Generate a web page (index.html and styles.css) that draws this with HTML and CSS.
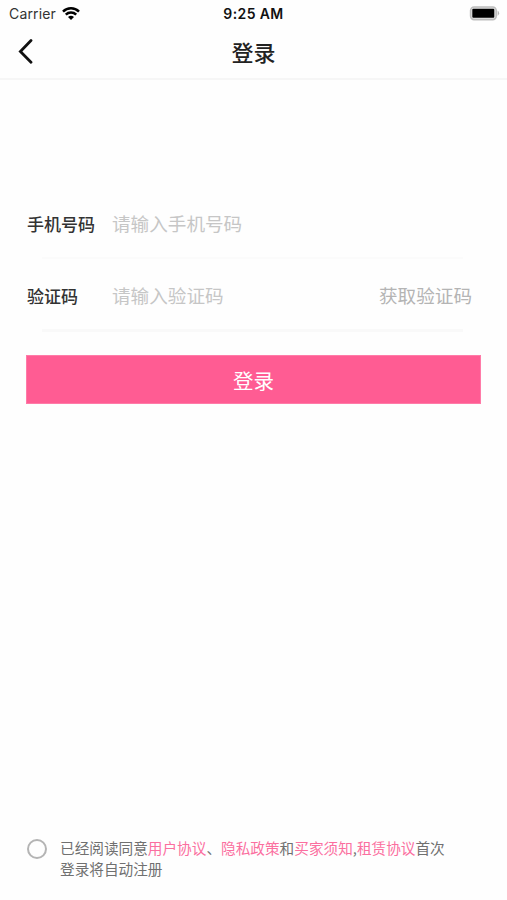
FILE: index.html
```html
<!DOCTYPE html>
<html lang="zh-CN">
<head>
    <meta charset="UTF-8">
    <meta name="viewport" content="width=device-width, initial-scale=1.0">
    <title>登录</title>
    <link rel="stylesheet" href="styles.css">
</head>
<body>

<div class="status-bar">
    <div class="carrier">
        <span>Carrier</span>
        <svg class="wifi" width="18" height="14" viewBox="0 0 18 14">
            <path d="M1 4.6 A11.4 11.4 0 0 1 17 4.6" />
            <path d="M3.8 7.6 A7.4 7.4 0 0 1 14.2 7.6" />
            <path class="dot" d="M6 10.1 A4.3 4.3 0 0 1 12 10.1 L9 13 Z" />
        </svg>
    </div>
    <div class="time">9:25 AM</div>
    <div class="battery">
        <svg width="31" height="15" viewBox="0 0 31 15">
            <rect x="1.6" y="1" width="25.6" height="12.6" rx="3.5" fill="#e6e6e6" stroke="#bdbdbd" stroke-width="1.6" />
            <rect x="3.3" y="2.8" width="22" height="9" rx="1" fill="#000" />
            <path d="M28.6 4.6 Q31.6 7.3 28.6 10 Z" fill="#b5b5b5" />
        </svg>
    </div>
</div>

<div class="nav-bar">
    <svg class="back" width="16" height="26" viewBox="0 0 16 26">
        <path d="M14 2.6 L3.4 13.4 L14 24.2" />
    </svg>
    <h1 class="title">登录</h1>
</div>

<div class="login-form">
    <div class="field">
        <label class="label">手机号码</label>
        <span class="placeholder">请输入手机号码</span>
    </div>
    <div class="line"></div>
    <div class="field">
        <label class="label">验证码</label>
        <span class="placeholder">请输入验证码</span>
        <span class="get-code">获取验证码</span>
    </div>
    <div class="line line-code"></div>
    <button class="login-btn">登录</button>
</div>

<div class="agreement">
    <span class="radio"></span>
    <p class="agreement-text">已经阅读同意<a>用户协议</a>、<a>隐私政策</a>和<a>买家须知</a>,<a>租赁协议</a>首次<br>登录将自动注册</p>
</div>

</body>
</html>
```
FILE: styles.css
```css
* {
    box-sizing: border-box;
}
body {
    margin: 0;
    height: 900px;
    display: flex;
    flex-direction: column;
    overflow: hidden;
    background-color: #fefefe;
    font-family: "Noto Sans CJK SC", sans-serif;
    color: #333;
}
.status-bar {
    display: flex;
    align-items: center;
    height: 27px;
    padding: 0 7px 0 9px;
    font-family: Inter, sans-serif;
    font-size: 14px;
}
.carrier, .battery {
    flex: 1;
    display: flex;
    align-items: center;
}
.carrier {
    gap: 6px;
    letter-spacing: 0.15px;
}
.battery {
    justify-content: flex-end;
}
.time {
    margin-right: 2px;
    font-weight: 600;
    letter-spacing: 0.4px;
    color: #111;
}
.wifi {
    fill: none;
    stroke: #000;
    stroke-width: 2.5;
}
.wifi .dot {
    fill: #000;
    stroke: none;
}
.nav-bar {
    display: flex;
    align-items: center;
    height: 53px;
    padding: 0 17px 3px 17px;
    border-bottom: 2px solid #f6f6f6;
}
.back {
    fill: none;
    stroke: #111;
    stroke-width: 2.8;
    stroke-linecap: round;
}
.title {
    flex: 1;
    margin: 0 16px 0 0;
    text-align: center;
    font-size: 22px;
    line-height: 30px;
    font-weight: 500;
    color: #222;
}
.login-form {
    padding: 107px 26px 0;
}
.field {
    display: flex;
    align-items: center;
    height: 70px;
    padding: 2px 9px 0 1px;
}
.label {
    width: 85px;
    font-size: 17px;
    font-weight: 500;
}
.placeholder {
    margin-bottom: 2px;
    font-size: 18.6px;
    color: #c6c6c6;
}
.get-code {
    margin: 0 0 2px auto;
    font-size: 18.6px;
    color: #b4b4b4;
}
.line {
    height: 2px;
    margin: 0 18px 0 16px;
    background-color: #fbfbfb;
}
.line-code {
    height: 3px;
    background-color: #f9f9f9;
}
.login-btn {
    display: block;
    width: 455px;
    height: 49px;
    margin-top: 23px;
    padding: 0;
    border: 1px solid #ff7ba8;
    background-color: #ff5c93;
    color: #fff;
    font-family: inherit;
    font-size: 20.5px;
}
.agreement {
    display: flex;
    margin-top: auto;
    padding: 0 27px 21px;
}
.radio {
    width: 20px;
    height: 20px;
    margin: 2px 13px 0 0;
    border: 2px solid #b4b4b4;
    border-radius: 50%;
}
.agreement-text {
    margin: 0;
    font-size: 14.65px;
    line-height: 21px;
    color: #707070;
}
.agreement-text a {
    color: #fb6f9f;
}
```
